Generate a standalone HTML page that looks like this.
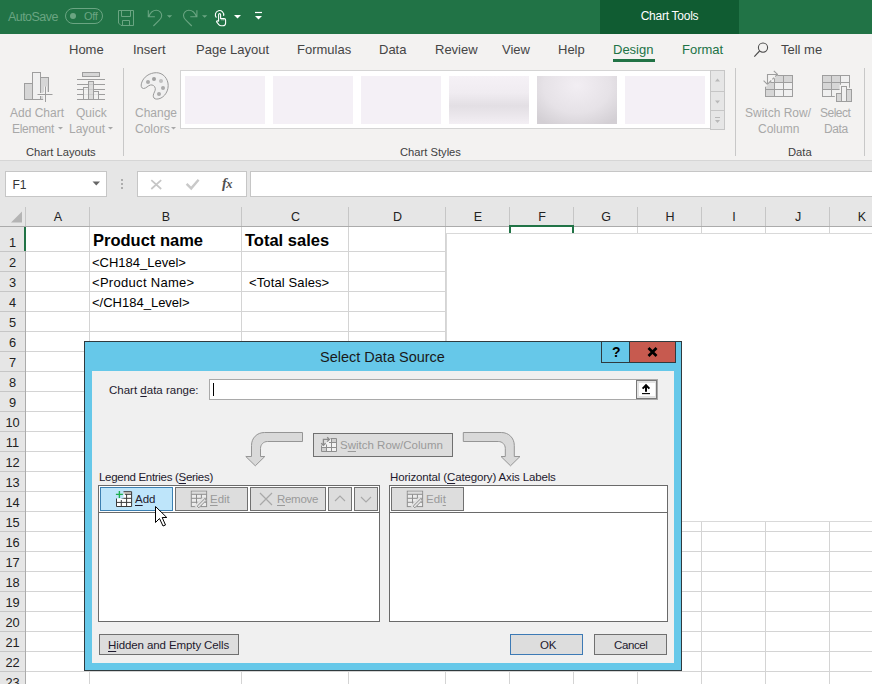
<!DOCTYPE html>
<html><head><meta charset="utf-8">
<style>
*{margin:0;padding:0;box-sizing:border-box}
html,body{width:872px;height:684px;overflow:hidden;background:#fff;font-family:"Liberation Sans",sans-serif}
.a{position:absolute;white-space:nowrap}
svg.a{overflow:visible}
#title{left:0;top:0;width:872px;height:34px;background:#217346}
#ct{left:600px;top:0;width:139px;height:34px;background:#105c32;color:#fff;font-size:12px;text-align:center;line-height:33px;letter-spacing:-0.25px}
#tabs{left:0;top:34px;width:872px;height:32px;background:#f3f2f1}
.tab{top:42px;font-size:13px;color:#454545}
#ribbon{left:0;top:66px;width:872px;height:95px;background:#f3f2f1;border-bottom:1px solid #d6d6d6}
.rl{font-size:12px;color:#a8a8a8;line-height:16px}
.gl{font-size:11.2px;color:#404040;top:146px}
.sep{width:1px;background:#c8c8c8;top:68px;height:88px}
#fbar{left:0;top:161px;width:872px;height:46px;background:#e6e6e6}
#grid{left:0;top:207px;width:872px;height:477px;background:#fff}
.ch{top:207px;height:20px;line-height:20px;text-align:center;padding-left:2px;font-size:12.5px;color:#222}
.rh{left:0;width:25px;text-align:center;font-size:12.8px;color:#222}
.ct{font-size:13px;color:#000}
.dt{font-size:11.5px;color:#1e1a2e}
.dis{color:#9a9a9a}
.btn{background:#dddddd;border:1px solid #707070}
u{text-decoration:underline;text-underline-offset:2px}
</style></head><body>
<div id="title" class="a"></div>
<div class="a" style="left:8px;top:10px;font-size:12.5px;letter-spacing:-0.55px;color:#6aa582">AutoSave</div>
<div class="a" style="left:65px;top:8px;width:38px;height:16px;border:1px solid #6aa582;border-radius:8px"></div>
<div class="a" style="left:70px;top:13px;width:6px;height:6px;border-radius:3px;background:#6aa582"></div>
<div class="a" style="left:84px;top:10px;font-size:11px;letter-spacing:-0.3px;color:#6aa582">Off</div>
<!-- save icon -->
<svg class="a" style="left:112px;top:4px" width="28" height="26" viewBox="112 4 28 26"><path d="M118.5 10.5H133.5V25.5H121L118.5 23Z M121.5 10.5V16.5H130.5V10.5 M122.5 25.5V20.5H129.5V25.5" fill="none" stroke="#6aa582" stroke-width="1"/></svg>
<!-- undo -->
<svg class="a" style="left:140px;top:4px" width="72" height="26" viewBox="140 4 72 26"><path d="M148.3 10.2V16.8H154.9M148.9 16.2C150.5 12.3 153.2 10.3 156.3 10.3C159.4 10.3 161.7 12.8 161.7 15.6C161.7 17.6 160.8 18.9 159.3 20.2L153.4 26" fill="none" stroke="#6aa582" stroke-width="1.1"/><path d="M 196.9 10.2 V 16.8 H 190.3 M 196.3 16.2 C 194.7 12.3 192.0 10.3 188.9 10.3 C 185.8 10.3 183.5 12.8 183.5 15.6 C 183.5 17.6 184.4 18.9 185.9 20.2 L 191.8 26.0" fill="none" stroke="#6aa582" stroke-width="1.1"/><path d="M166.9 15.2H172.2L169.55 17.8Z M202 15.2H207.3L204.65 17.8Z" fill="#6aa582"/></svg>
<!-- touch -->
<svg class="a" style="left:208px;top:4px" width="24" height="26" viewBox="208 4 24 26"><path d="M216.4 17.6A4.2 4.2 0 1 1 223.6 15.8" fill="none" stroke="#fff" stroke-width="1.1"/><path d="M218.6 21.2V14.6A1 1 0 0 1 220.6 14.6V18.6H224.2Q225.6 18.6 225.6 20V23Q225.6 25.8 222.8 25.8H221.2Q219.8 25.8 218.8 24.6L216.8 22.2Q216.2 21.2 217.2 20.8Z" fill="none" stroke="#fff" stroke-width="1.1" stroke-linejoin="round"/><path d="M222 18.8V20.5M223.8 18.8V20.5" stroke="#fff" stroke-width="0.6"/></svg>
<svg class="a" style="left:234px;top:15px" width="7" height="4" viewBox="0 0 7 4"><path d="M0 0H7L3.5 3.5Z" fill="#fff"/></svg>
<svg class="a" style="left:255px;top:12px" width="7" height="9" viewBox="0 0 7 9"><path d="M0 0.5H7" stroke="#fff" stroke-width="1.2"/><path d="M0 4H7L3.5 7.5Z" fill="#fff"/></svg>

<div id="ct" class="a">Chart Tools</div>
<div id="tabs" class="a"></div>
<div class="a tab" style="left:69px">Home</div>
<div class="a tab" style="left:133px">Insert</div>
<div class="a tab" style="left:196px">Page Layout</div>
<div class="a tab" style="left:297px">Formulas</div>
<div class="a tab" style="left:379px">Data</div>
<div class="a tab" style="left:435px">Review</div>
<div class="a tab" style="left:502px">View</div>
<div class="a tab" style="left:558px">Help</div>
<div class="a tab" style="left:613px;color:#217346">Design</div>
<div class="a" style="left:613px;top:59px;width:42px;height:3px;background:#217346"></div>
<div class="a tab" style="left:682px;color:#217346">Format</div>
<svg class="a" style="left:752px;top:40px" width="18" height="18" viewBox="752 40 18 18"><circle cx="763" cy="47.6" r="4.6" fill="none" stroke="#4a4a4a" stroke-width="1.05"/><path d="M759.6 51L754.3 56.6" stroke="#4a4a4a" stroke-width="1.1"/></svg>
<div class="a tab" style="left:781px">Tell me</div>
<div id="ribbon" class="a"></div>

<!-- ribbon icons -->
<svg class="a" style="left:23px;top:71px" width="32" height="33" viewBox="23 71 32 33">
<rect x="24.5" y="83.5" width="8" height="16" fill="#d6d6d6" stroke="#9e9e9e"/>
<rect x="32.5" y="72.5" width="8" height="27" fill="#f0f0f0" stroke="#9e9e9e"/>
<rect x="40.5" y="77.5" width="8" height="22" fill="#d6d6d6" stroke="#9e9e9e"/>
<path d="M43.2 92H54V103H43.2Z" fill="#f3f2f1"/><path d="M37.5 94.5H52.5M45.5 86.5V102" stroke="#f3f2f1" stroke-width="3"/><path d="M37.5 94.5H52.5M45.5 86.5V102" stroke="#9e9e9e" stroke-width="1"/>
</svg>
<svg class="a" style="left:76px;top:71px" width="30" height="31" viewBox="76 71 30 31">
<rect x="82.5" y="72.5" width="17" height="4" fill="#d6d6d6" stroke="#9e9e9e"/>
<path d="M77 79.5H105M77 84.5H105M77 89.5H105M77 94.5H105M77 99.5H105" stroke="#9e9e9e"/>
<rect x="83.5" y="87.5" width="5" height="12" fill="#f0f0f0" fill-opacity="0.8" stroke="#9e9e9e"/>
<rect x="88.5" y="81.5" width="5" height="18" fill="#d6d6d6" fill-opacity="0.8" stroke="#9e9e9e"/>
<rect x="93.5" y="91.5" width="5" height="8" fill="#f0f0f0" fill-opacity="0.8" stroke="#9e9e9e"/>
</svg>
<svg class="a" style="left:140px;top:71px" width="30" height="30" viewBox="140 71 30 30">
<path d="M156.4 72.7C163 72.7 168.2 78.6 168.2 85.6C168.2 93 162.5 99.1 156.8 99.1C154.3 99.1 153 97.6 153.3 95.2C153.6 92.8 155.6 91 155.3 88.5C154.9 85.8 152.6 84.6 150.5 85C148.2 85.4 146 88.6 143.5 88.5C141.1 88.3 140.8 85.6 141.5 83.2C143.3 77 149.5 72.7 156.4 72.7Z" fill="#f0f0f0" stroke="#9a9a9a" stroke-width="1"/>
<circle cx="148" cy="82" r="2" fill="#ababab"/><circle cx="154" cy="79" r="2" fill="#a0a0a0"/><circle cx="161" cy="81" r="2" fill="#c0c0c0"/><circle cx="163" cy="88" r="2" fill="#ababab"/><circle cx="159" cy="94" r="2" fill="#ababab"/>
</svg>
<div class="a rl" style="left:10px;top:105px">Add Chart</div>
<div class="a rl" style="left:12px;top:121px;letter-spacing:-0.3px">Element</div>
<div class="a rl" style="left:76px;top:105px">Quick</div>
<div class="a rl" style="left:69px;top:121px">Layout</div>
<div class="a rl" style="left:135px;top:105px">Change</div>
<div class="a rl" style="left:135px;top:121px">Colors</div>
<svg class="a" style="left:58px;top:127px" width="5" height="3" viewBox="0 0 5 3"><path d="M0 0H5L2.5 2.5Z" fill="#a8a8a8"/></svg>
<svg class="a" style="left:108px;top:127px" width="5" height="3" viewBox="0 0 5 3"><path d="M0 0H5L2.5 2.5Z" fill="#a8a8a8"/></svg>
<svg class="a" style="left:171px;top:127px" width="5" height="3" viewBox="0 0 5 3"><path d="M0 0H5L2.5 2.5Z" fill="#a8a8a8"/></svg>
<div class="a gl" style="left:26px">Chart Layouts</div>
<div class="a sep" style="left:123px"></div>
<!-- gallery -->
<div class="a" style="left:180px;top:70px;width:531px;height:59px;background:#fff;border:1px solid #d4d4d4;border-right:none"></div>
<div class="a" style="left:185px;top:76px;width:80px;height:48px;background:#f4f0f6"></div>
<div class="a" style="left:273px;top:76px;width:80px;height:48px;background:#f4f0f6"></div>
<div class="a" style="left:361px;top:76px;width:80px;height:48px;background:#f4f0f6"></div>
<div class="a" style="left:449px;top:76px;width:80px;height:48px;background:linear-gradient(#f5f1f6 0%,#f0ecf1 35%,#e3dfe4 62%,#e9e5ea 78%,#f3eff4 100%)"></div>
<div class="a" style="left:537px;top:76px;width:80px;height:48px;background:radial-gradient(ellipse 70% 95% at 50% 20%,#f2eef3 0%,#e6e2e7 60%,#d3cfd4 100%)"></div>
<div class="a" style="left:625px;top:76px;width:80px;height:48px;background:#f4f0f6"></div>
<div class="a" style="left:710px;top:70px;width:15px;height:22px;border:1px solid #c6c6c6;background:#e6e6e6"></div>
<div class="a" style="left:710px;top:91px;width:15px;height:20px;border:1px solid #c6c6c6;background:#e6e6e6"></div>
<div class="a" style="left:710px;top:110px;width:15px;height:20px;border:1px solid #c6c6c6;background:#e6e6e6"></div>
<svg class="a" style="left:715px;top:78px" width="6" height="4" viewBox="0 0 6 4"><path d="M0 3.5H5L2.5 0.5Z" fill="#b8b8b8"/></svg>
<svg class="a" style="left:715px;top:99.5px" width="6" height="4" viewBox="0 0 6 4"><path d="M0 0.5H5L2.5 3.5Z" fill="#b8b8b8"/></svg>
<svg class="a" style="left:715px;top:117px" width="6" height="7" viewBox="0 0 6 7"><path d="M0 0.5H5" stroke="#b8b8b8"/><path d="M0 3H5L2.5 6Z" fill="#b8b8b8"/></svg>
<div class="a gl" style="left:400px">Chart Styles</div>
<div class="a sep" style="left:735px"></div>
<svg class="a" style="left:760px;top:68px" width="36" height="32" viewBox="760 68 36 32">
<rect x="765.5" y="75.5" width="27" height="21" fill="#f0f0f0" stroke="#9e9e9e"/>
<rect x="774.5" y="75.5" width="18" height="7" fill="#d6d6d6" stroke="#9e9e9e"/>
<rect x="765.5" y="82.5" width="9" height="14" fill="#d6d6d6" stroke="#9e9e9e"/>
<path d="M765.5 89.5H792.5M783.5 75.5V96.5" stroke="#9e9e9e"/>
<path d="M762 69H783.8L766 86.8H762Z" fill="#f3f2f1"/>
<path d="M767.5 84V74.5H778M773.8 70.8L777.8 74.6M763.6 80.6L767.4 84.4" fill="none" stroke="#9e9e9e" stroke-width="1.1"/>
<path d="M767.4 84.4L777.8 74" fill="none" stroke="#9e9e9e" stroke-width="1.1" stroke-dasharray="5.5 1.5 2.5 1.5 3"/>
</svg>
<svg class="a" style="left:820px;top:73px" width="34" height="30" viewBox="820 73 34 30">
<rect x="822.5" y="75.5" width="27" height="21" fill="#f0f0f0" stroke="#9e9e9e"/>
<rect x="822.5" y="75.5" width="18" height="14" fill="#d6d6d6" stroke="#9e9e9e"/>
<path d="M822.5 82.5H849.5M831.5 75.5V96.5M840.5 75.5V96.5M822.5 89.5H849.5" stroke="#9e9e9e"/>
<path d="M834.8 91.8H839.6V84.8H848.2V87.8H853.2V103H834.8Z" fill="#f3f2f1"/><rect x="836.5" y="93.5" width="5" height="8" fill="#d6d6d6" stroke="#9e9e9e"/>
<rect x="841.5" y="86.5" width="5" height="15" fill="#f0f0f0" stroke="#9e9e9e"/>
<rect x="846.5" y="89.5" width="5" height="12" fill="#d6d6d6" stroke="#9e9e9e"/>
</svg>
<div class="a rl" style="left:745px;top:105px">Switch Row/</div>
<div class="a rl" style="left:758px;top:121px">Column</div>
<div class="a rl" style="left:820px;top:105px;letter-spacing:-0.5px">Select</div>
<div class="a rl" style="left:824px;top:121px;letter-spacing:-0.4px">Data</div>
<div class="a gl" style="left:788px">Data</div>
<div class="a sep" style="left:864px"></div>
<div id="fbar" class="a"></div>
<div id="grid" class="a"></div>

<div class="a" style="left:5px;top:171px;width:102px;height:26px;background:#fff;border:1px solid #c6c6c6"></div>
<div class="a" style="left:12.5px;top:178px;font-size:12px;color:#333">F1</div>
<svg class="a" style="left:92px;top:181px" width="9" height="5" viewBox="0 0 9 5"><path d="M0.5 0.5H8L4.25 4.5Z" fill="#666"/></svg>
<svg class="a" style="left:120px;top:178px" width="4" height="12" viewBox="0 0 4 12"><circle cx="2" cy="2" r="1" fill="#9a9a9a"/><circle cx="2" cy="6" r="1" fill="#9a9a9a"/><circle cx="2" cy="10" r="1" fill="#9a9a9a"/></svg>
<div class="a" style="left:137px;top:171px;width:110px;height:26px;background:#fff;border:1px solid #c6c6c6"></div>
<svg class="a" style="left:148px;top:176px" width="16" height="16" viewBox="148 176 16 16"><path d="M151.3 180.2L161.2 189M161.2 180.2L151.3 189" stroke="#c6c6c6" stroke-width="1.7"/></svg>
<svg class="a" style="left:184px;top:176px" width="18" height="16" viewBox="184 176 18 16"><path d="M186.6 183.8L191.2 188.4L198.6 179.8" fill="none" stroke="#c9c9c9" stroke-width="2.4"/></svg>
<div class="a" style="left:222px;top:175px;font-size:14.5px;font-family:'Liberation Serif',serif;font-style:italic;font-weight:bold;color:#505050">f<span style="font-size:12.5px;letter-spacing:-0.5px;margin-left:-0.5px">x</span></div>
<div class="a" style="left:250px;top:171px;width:630px;height:26px;background:#fff;border:1px solid #c6c6c6"></div>
<div class="a" style="left:0;top:207px;width:872px;height:20px;background:#e6e6e6;border-bottom:1px solid #ababab"></div>
<svg class="a" style="left:10px;top:211px" width="13" height="12" viewBox="0 0 13 12"><path d="M12 0.5V11.5H1Z" fill="#b4b4b4"/></svg>
<div class="a" style="left:89px;top:207px;width:1px;height:19px;background:#c6c6c6"></div>
<div class="a ch" style="left:25px;width:64px">A</div>
<div class="a" style="left:241px;top:207px;width:1px;height:19px;background:#c6c6c6"></div>
<div class="a ch" style="left:89px;width:152px">B</div>
<div class="a" style="left:348px;top:207px;width:1px;height:19px;background:#c6c6c6"></div>
<div class="a ch" style="left:241px;width:107px">C</div>
<div class="a" style="left:445px;top:207px;width:1px;height:19px;background:#c6c6c6"></div>
<div class="a ch" style="left:348px;width:97px">D</div>
<div class="a" style="left:509px;top:207px;width:1px;height:19px;background:#c6c6c6"></div>
<div class="a ch" style="left:445px;width:64px">E</div>
<div class="a" style="left:573px;top:207px;width:1px;height:19px;background:#c6c6c6"></div>
<div class="a ch" style="left:509px;width:64px">F</div>
<div class="a" style="left:637px;top:207px;width:1px;height:19px;background:#c6c6c6"></div>
<div class="a ch" style="left:573px;width:64px">G</div>
<div class="a" style="left:701px;top:207px;width:1px;height:19px;background:#c6c6c6"></div>
<div class="a ch" style="left:637px;width:64px">H</div>
<div class="a" style="left:765px;top:207px;width:1px;height:19px;background:#c6c6c6"></div>
<div class="a ch" style="left:701px;width:64px">I</div>
<div class="a" style="left:829px;top:207px;width:1px;height:19px;background:#c6c6c6"></div>
<div class="a ch" style="left:765px;width:64px">J</div>
<div class="a" style="left:893px;top:207px;width:1px;height:19px;background:#c6c6c6"></div>
<div class="a ch" style="left:829px;width:64px">K</div>
<div class="a" style="left:25px;top:207px;width:1px;height:19px;background:#c6c6c6"></div>
<div class="a" style="left:0;top:227px;width:26px;height:457px;background:#e6e6e6;border-right:1px solid #ababab"></div>
<div class="a rh" style="top:229px;height:24px;line-height:28px">1</div>
<div class="a" style="left:0;top:251px;width:25px;height:1px;background:#c6c6c6"></div>
<div class="a" style="left:26px;top:251px;width:846px;height:1px;background:#d4d4d4"></div>
<div class="a rh" style="top:251px;height:20px;line-height:24px">2</div>
<div class="a" style="left:0;top:271px;width:25px;height:1px;background:#c6c6c6"></div>
<div class="a" style="left:26px;top:271px;width:846px;height:1px;background:#d4d4d4"></div>
<div class="a rh" style="top:271px;height:20px;line-height:24px">3</div>
<div class="a" style="left:0;top:291px;width:25px;height:1px;background:#c6c6c6"></div>
<div class="a" style="left:26px;top:291px;width:846px;height:1px;background:#d4d4d4"></div>
<div class="a rh" style="top:291px;height:20px;line-height:24px">4</div>
<div class="a" style="left:0;top:311px;width:25px;height:1px;background:#c6c6c6"></div>
<div class="a" style="left:26px;top:311px;width:846px;height:1px;background:#d4d4d4"></div>
<div class="a rh" style="top:311px;height:20px;line-height:24px">5</div>
<div class="a" style="left:0;top:331px;width:25px;height:1px;background:#c6c6c6"></div>
<div class="a" style="left:26px;top:331px;width:846px;height:1px;background:#d4d4d4"></div>
<div class="a rh" style="top:331px;height:20px;line-height:24px">6</div>
<div class="a" style="left:0;top:351px;width:25px;height:1px;background:#c6c6c6"></div>
<div class="a" style="left:26px;top:351px;width:846px;height:1px;background:#d4d4d4"></div>
<div class="a rh" style="top:351px;height:20px;line-height:24px">7</div>
<div class="a" style="left:0;top:371px;width:25px;height:1px;background:#c6c6c6"></div>
<div class="a" style="left:26px;top:371px;width:846px;height:1px;background:#d4d4d4"></div>
<div class="a rh" style="top:371px;height:20px;line-height:24px">8</div>
<div class="a" style="left:0;top:391px;width:25px;height:1px;background:#c6c6c6"></div>
<div class="a" style="left:26px;top:391px;width:846px;height:1px;background:#d4d4d4"></div>
<div class="a rh" style="top:391px;height:20px;line-height:24px">9</div>
<div class="a" style="left:0;top:411px;width:25px;height:1px;background:#c6c6c6"></div>
<div class="a" style="left:26px;top:411px;width:846px;height:1px;background:#d4d4d4"></div>
<div class="a rh" style="top:411px;height:20px;line-height:24px">10</div>
<div class="a" style="left:0;top:431px;width:25px;height:1px;background:#c6c6c6"></div>
<div class="a" style="left:26px;top:431px;width:846px;height:1px;background:#d4d4d4"></div>
<div class="a rh" style="top:431px;height:20px;line-height:24px">11</div>
<div class="a" style="left:0;top:451px;width:25px;height:1px;background:#c6c6c6"></div>
<div class="a" style="left:26px;top:451px;width:846px;height:1px;background:#d4d4d4"></div>
<div class="a rh" style="top:451px;height:20px;line-height:24px">12</div>
<div class="a" style="left:0;top:471px;width:25px;height:1px;background:#c6c6c6"></div>
<div class="a" style="left:26px;top:471px;width:846px;height:1px;background:#d4d4d4"></div>
<div class="a rh" style="top:471px;height:20px;line-height:24px">13</div>
<div class="a" style="left:0;top:491px;width:25px;height:1px;background:#c6c6c6"></div>
<div class="a" style="left:26px;top:491px;width:846px;height:1px;background:#d4d4d4"></div>
<div class="a rh" style="top:491px;height:20px;line-height:24px">14</div>
<div class="a" style="left:0;top:511px;width:25px;height:1px;background:#c6c6c6"></div>
<div class="a" style="left:26px;top:511px;width:846px;height:1px;background:#d4d4d4"></div>
<div class="a rh" style="top:511px;height:20px;line-height:24px">15</div>
<div class="a" style="left:0;top:531px;width:25px;height:1px;background:#c6c6c6"></div>
<div class="a" style="left:26px;top:531px;width:846px;height:1px;background:#d4d4d4"></div>
<div class="a rh" style="top:531px;height:20px;line-height:24px">16</div>
<div class="a" style="left:0;top:551px;width:25px;height:1px;background:#c6c6c6"></div>
<div class="a" style="left:26px;top:551px;width:846px;height:1px;background:#d4d4d4"></div>
<div class="a rh" style="top:551px;height:20px;line-height:24px">17</div>
<div class="a" style="left:0;top:571px;width:25px;height:1px;background:#c6c6c6"></div>
<div class="a" style="left:26px;top:571px;width:846px;height:1px;background:#d4d4d4"></div>
<div class="a rh" style="top:571px;height:20px;line-height:24px">18</div>
<div class="a" style="left:0;top:591px;width:25px;height:1px;background:#c6c6c6"></div>
<div class="a" style="left:26px;top:591px;width:846px;height:1px;background:#d4d4d4"></div>
<div class="a rh" style="top:591px;height:20px;line-height:24px">19</div>
<div class="a" style="left:0;top:611px;width:25px;height:1px;background:#c6c6c6"></div>
<div class="a" style="left:26px;top:611px;width:846px;height:1px;background:#d4d4d4"></div>
<div class="a rh" style="top:611px;height:20px;line-height:24px">20</div>
<div class="a" style="left:0;top:631px;width:25px;height:1px;background:#c6c6c6"></div>
<div class="a" style="left:26px;top:631px;width:846px;height:1px;background:#d4d4d4"></div>
<div class="a rh" style="top:631px;height:20px;line-height:24px">21</div>
<div class="a" style="left:0;top:651px;width:25px;height:1px;background:#c6c6c6"></div>
<div class="a" style="left:26px;top:651px;width:846px;height:1px;background:#d4d4d4"></div>
<div class="a rh" style="top:651px;height:20px;line-height:24px">22</div>
<div class="a" style="left:0;top:671px;width:25px;height:1px;background:#c6c6c6"></div>
<div class="a" style="left:26px;top:671px;width:846px;height:1px;background:#d4d4d4"></div>
<div class="a rh" style="top:671px;height:20px;line-height:24px">23</div>
<div class="a" style="left:0;top:691px;width:25px;height:1px;background:#c6c6c6"></div>
<div class="a" style="left:26px;top:691px;width:846px;height:1px;background:#d4d4d4"></div>
<div class="a rh" style="top:691px;height:20px;line-height:24px">24</div>
<div class="a" style="left:0;top:711px;width:25px;height:1px;background:#c6c6c6"></div>
<div class="a" style="left:26px;top:711px;width:846px;height:1px;background:#d4d4d4"></div>
<div class="a" style="left:89px;top:227px;width:1px;height:457px;background:#d4d4d4"></div>
<div class="a" style="left:241px;top:227px;width:1px;height:457px;background:#d4d4d4"></div>
<div class="a" style="left:348px;top:227px;width:1px;height:457px;background:#d4d4d4"></div>
<div class="a" style="left:445px;top:227px;width:1px;height:457px;background:#d4d4d4"></div>
<div class="a" style="left:509px;top:227px;width:1px;height:457px;background:#d4d4d4"></div>
<div class="a" style="left:573px;top:227px;width:1px;height:457px;background:#d4d4d4"></div>
<div class="a" style="left:637px;top:227px;width:1px;height:457px;background:#d4d4d4"></div>
<div class="a" style="left:701px;top:227px;width:1px;height:457px;background:#d4d4d4"></div>
<div class="a" style="left:765px;top:227px;width:1px;height:457px;background:#d4d4d4"></div>
<div class="a" style="left:829px;top:227px;width:1px;height:457px;background:#d4d4d4"></div>
<div class="a" style="left:893px;top:227px;width:1px;height:457px;background:#d4d4d4"></div>
<div class="a" style="left:24px;top:227px;width:2px;height:24px;background:#217346"></div>
<div class="a" style="left:509px;top:225px;width:65px;height:2px;background:#217346"></div>
<div class="a" style="left:509px;top:225px;width:2px;height:9px;background:#217346"></div>
<div class="a" style="left:572px;top:225px;width:2px;height:9px;background:#217346"></div>
<div class="a" style="left:93px;top:231px;font-size:16.5px;font-weight:bold;color:#000">Product name</div>
<div class="a" style="left:245px;top:231px;font-size:16.5px;font-weight:bold;color:#000">Total sales</div>
<div class="a ct" style="left:92px;top:255px">&lt;CH184_Level&gt;</div>
<div class="a ct" style="left:92px;top:275px;letter-spacing:0.3px">&lt;Product Name&gt;</div>
<div class="a ct" style="left:249px;top:275px;letter-spacing:0.12px">&lt;Total Sales&gt;</div>
<div class="a ct" style="left:92px;top:295px">&lt;/CH184_Level&gt;</div>
<div class="a" style="left:446px;top:233px;width:440px;height:289px;background:#fff;border:1px solid #d9d9d9"></div>


<!-- dialog -->
<div class="a" style="left:84px;top:341px;width:598px;height:330px;background:#66c8e9;border:1px solid #2f3a3e"></div>
<div class="a" style="left:92px;top:371px;width:582px;height:292px;background:#f0f0f0"></div>
<div class="a" style="left:320px;top:349px;font-size:14.5px;color:#1a1a1a">Select Data Source</div>
<div class="a" style="left:601px;top:342px;width:29px;height:21px;background:#66c8e9;border:1px solid #2f3a3e;border-top:none"></div>
<div class="a" style="left:629px;top:342px;width:47px;height:21px;background:#c75a4f;border:1px solid #2f3a3e;border-top:none"></div>
<div class="a" style="left:612px;top:344px;font-size:14px;font-weight:bold;color:#000">?</div>
<svg class="a" style="left:647px;top:347px" width="11" height="10" viewBox="0 0 11 10"><path d="M1.5 1L9.5 9M9.5 1L1.5 9" stroke="#000" stroke-width="2.7"/></svg>

<div class="a dt" style="left:109px;top:384px">Chart <u>d</u>ata range:</div>
<div class="a" style="left:209px;top:379px;width:449px;height:21px;background:#fff;border:1px solid #a9a9a9"></div>
<div class="a" style="left:213px;top:383px;width:1px;height:13px;background:#000"></div>
<div class="a" style="left:636px;top:380px;width:21px;height:19px;background:#e3e3e3;border:1px solid #787878"></div>
<div class="a" style="left:639px;top:383px;width:16px;height:13px;background:#fff"></div>
<svg class="a" style="left:636px;top:380px" width="22" height="20" viewBox="636 380 22 20"><path d="M642.6 388.6L646 385.2L649.4 388.6M646 385.5V391.8" fill="none" stroke="#000" stroke-width="2"/><path d="M642 393.6H650" stroke="#000" stroke-width="1.1"/></svg>

<!-- arrows -->
<svg class="a" style="left:240px;top:426px" width="290" height="44" viewBox="240 426 290 44">
<path d="M302.5 432.5V441.5H267.5C263.5 441.5 260.5 444.5 260.5 448.5V456.5H264.8L255.3 465.8L245.8 456.5H251.5V445.5C251.5 438 257 432.5 264.5 432.5Z" fill="#d9d9d9" stroke="#959595" stroke-width="1"/>
<path d="M 463.3 432.5 V 441.5 H 498.3 C 502.3 441.5 505.3 444.5 505.3 448.5 V 456.5 H 501.0 L 510.5 465.8 L 520.0 456.5 H 514.3 V 445.5 C 514.3 438.0 508.8 432.5 501.3 432.5 Z" fill="#d9d9d9" stroke="#959595" stroke-width="1"/>
</svg>
<div class="a btn" style="left:313px;top:433px;width:140px;height:24px"></div>
<svg class="a" style="left:316px;top:434px" width="24" height="22" viewBox="316 434 24 22">
<path d="M330.5 438.5H336.5V451.5H321.5V446.5L326.5 442.5Z" fill="#f2f2f2"/>
<rect x="331.5" y="438.5" width="5" height="4" fill="#cfcfcf"/>
<rect x="321.5" y="447.5" width="5" height="4" fill="#cfcfcf"/>
<path d="M321.5 445.5V451.5H336.5V438.5H330.5M326.5 444.5V451.5M331.5 438.5V451.5M329 442.5H336.5M321.5 447.5H336.5" fill="none" stroke="#8e8e8e" stroke-width="1"/>
<path d="M323.4 445V439.4H329.2M327.2 437.2L329.4 439.4L327.2 441.6M321.2 443.2L323.4 445.4L325.6 443.2" fill="none" stroke="#8a8a8a" stroke-width="1.3"/>
</svg>
<div class="a dt dis" style="left:340px;top:439px">S<u>w</u>itch Row/Column</div>

<div class="a dt" style="left:99px;top:471px;letter-spacing:-0.3px">Legend Entries (<u>S</u>eries)</div>
<div class="a dt" style="left:390px;top:471px;letter-spacing:-0.15px">Horizontal (<u>C</u>ategory) Axis Labels</div>

<div class="a" style="left:98px;top:485px;width:282px;height:137px;background:#fff;border:1px solid #6a6a6a"></div>
<div class="a" style="left:99px;top:486px;width:280px;height:27px;background:#fff;border-bottom:1px solid #6a6a6a"></div>
<div class="a" style="left:389px;top:485px;width:279px;height:137px;background:#fff;border:1px solid #6a6a6a"></div>
<div class="a" style="left:390px;top:486px;width:277px;height:27px;background:#fff;border-bottom:1px solid #6a6a6a"></div>

<div class="a" style="left:100px;top:487px;width:73px;height:24px;background:#bee5fa;border:1px solid #3c7fb1"></div>
<svg class="a" style="left:112px;top:488px" width="24" height="22" viewBox="112 488 24 22">
<rect x="117" y="494.5" width="14.5" height="12" fill="#fff"/>
<rect x="122.5" y="491.7" width="9" height="2.6" fill="#d9d2cc"/>
<path d="M122.5 491.7H131.6V506.5H116.5V497.3" fill="none" stroke="#3a3a3a" stroke-width="1"/>
<path d="M125 494.3H131.6M121.5 498.3H131.6M116.5 502.4H131.6M121.3 500V506.5M126.6 494.3V506.5" fill="none" stroke="#3a3a3a" stroke-width="1"/>
<rect x="114.5" y="489.5" width="9" height="9" fill="#bee5fa"/>
<path d="M115.9 494.4H122.9M119.4 490.9V497.9" stroke="#1eae4e" stroke-width="1.4"/>
</svg>
<div class="a dt" style="left:135px;top:493px"><u>A</u>dd</div>

<div class="a btn" style="left:175px;top:487px;width:73px;height:24px"></div>
<svg class="a" style="left:186px;top:488px" width="26" height="22" viewBox="186 488 26 22">
<rect x="191.3" y="491.2" width="15.3" height="15.4" fill="#ececec" stroke="#8e8e8e"/>
<rect x="191.8" y="491.7" width="14.3" height="2.6" fill="#dcdcdc"/>
<path d="M191.3 494.3H206.6M191.3 498.3H206.6M191.3 502.3H206.6M196.5 494.3V506.6M201.4 494.3V506.6" stroke="#8e8e8e"/>
<path d="M196 507.5L205 498.5" stroke="#e1e1e1" stroke-width="5"/>
<path d="M197.2 506.2L204.8 498.6L206.4 500.2L198.8 507.8Z" fill="#e6e6e6" stroke="#8e8e8e" stroke-width="1"/>
</svg>
<div class="a dt dis" style="left:210px;top:493px"><u>E</u>dit</div>

<div class="a btn" style="left:250px;top:487px;width:76px;height:24px"></div>
<svg class="a" style="left:259px;top:492px" width="14" height="14" viewBox="0 0 14 14"><path d="M1 1L13 13M13 1L1 13" stroke="#a8a8a8" stroke-width="1.2"/></svg>
<div class="a dt dis" style="left:277px;top:493px;letter-spacing:-0.3px"><u>R</u>emove</div>

<div class="a btn" style="left:328px;top:487px;width:24px;height:24px"></div>
<svg class="a" style="left:334px;top:495px" width="12" height="7" viewBox="0 0 12 7"><path d="M1 6L6 1L11 6" fill="none" stroke="#a8a8a8" stroke-width="1.1"/></svg>
<div class="a btn" style="left:354px;top:487px;width:24px;height:24px"></div>
<svg class="a" style="left:360px;top:496px" width="12" height="7" viewBox="0 0 12 7"><path d="M1 1L6 6L11 1" fill="none" stroke="#a8a8a8" stroke-width="1.1"/></svg>

<div class="a btn" style="left:391px;top:487px;width:73px;height:24px"></div>
<svg class="a" style="left:402px;top:488px" width="26" height="22" viewBox="186 488 26 22">
<rect x="191.3" y="491.2" width="15.3" height="15.4" fill="#ececec" stroke="#8e8e8e"/>
<rect x="191.8" y="491.7" width="14.3" height="2.6" fill="#dcdcdc"/>
<path d="M191.3 494.3H206.6M191.3 498.3H206.6M191.3 502.3H206.6M196.5 494.3V506.6M201.4 494.3V506.6" stroke="#8e8e8e"/>
<path d="M196 507.5L205 498.5" stroke="#e1e1e1" stroke-width="5"/>
<path d="M197.2 506.2L204.8 498.6L206.4 500.2L198.8 507.8Z" fill="#e6e6e6" stroke="#8e8e8e" stroke-width="1"/>
</svg>
<div class="a dt dis" style="left:426px;top:493px">Edi<u>t</u></div>

<div class="a btn" style="left:99px;top:634px;width:140px;height:21px"></div>
<div class="a dt" style="left:108px;top:639px;letter-spacing:-0.1px"><u>H</u>idden and Empty Cells</div>
<div class="a btn" style="left:510px;top:634px;width:73px;height:21px;border-color:#3d7ab5"></div>
<div class="a dt" style="left:540px;top:639px;letter-spacing:-0.3px">OK</div>
<div class="a btn" style="left:594px;top:634px;width:73px;height:21px"></div>
<div class="a dt" style="left:614px;top:639px;letter-spacing:-0.4px">Cancel</div>

<!-- cursor -->
<svg class="a" style="left:150px;top:500px" width="24" height="32" viewBox="150 500 24 32"><path d="M155.5 506.5V522.5L159.5 518.5L163 526L165.5 525L162.2 517.5H166.8Z" fill="#fff" stroke="#000" stroke-width="1" stroke-linejoin="miter"/></svg>
</body></html>
